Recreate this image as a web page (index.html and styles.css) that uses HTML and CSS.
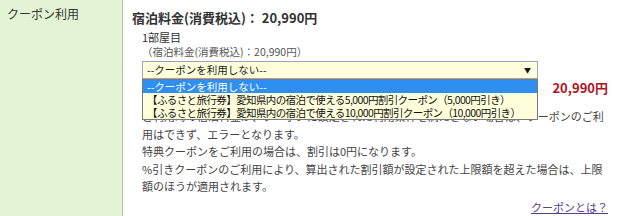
FILE: index.html
```html
<!DOCTYPE html>
<html lang="ja">
<head>
<meta charset="utf-8">
<title>クーポン利用</title>
<link rel="stylesheet" href="styles.css">
</head>
<body>
<div class="row">
  <div class="label">クーポン利用</div>
  <div class="content">
    <div class="total">宿泊料金(消費税込)：&nbsp;20,990円</div>
    <div class="room">
      <div class="room-title">1部屋目</div>
      <div class="room-price">（宿泊料金(消費税込)：20,990円）</div>
      <div class="select-wrap">
        <div class="select"><span>--クーポンを利用しない--</span><span class="arrow">▼</span></div>
        <ul class="options">
          <li class="selected">--クーポンを利用しない--</li>
          <li>【ふるさと旅行券】愛知県内の宿泊で使える5,000円割引クーポン（5,000円引き）</li>
          <li>【ふるさと旅行券】愛知県内の宿泊で使える10,000円割引クーポン（10,000円引き）</li>
        </ul>
      </div>
      <div class="discount-price">20,990円</div>
      <div class="notes">
        <p>ご利用時の宿泊料金が、クーポンに設定された利用条件を満たさない場合は、クーポンのご利用はできず、エラーとなります。</p>
        <p>特典クーポンをご利用の場合は、割引は0円になります。</p>
        <p>%引きクーポンのご利用により、算出された割引額が設定された上限額を超えた場合は、上限額のほうが適用されます。</p>
      </div>
    </div>
    <div class="link-row"><a class="help-link" href="#">クーポンとは？</a></div>
  </div>
</div>
</body>
</html>
```

FILE: styles.css
```css
html, body {
  margin: 0;
  padding: 0;
  background: #ffffff;
}

body {
  font-family: "Noto Sans CJK JP", "Noto Sans", sans-serif;
  color: #333333;
  width: 620px;
  height: 216px;
  overflow: hidden;
}

.row {
  display: flex;
  height: 216px;
}

.label {
  width: 123px;
  flex: none;
  background: #e2f4d4;
  border-right: 1px solid #a6cf8c;
  font-size: 12px;
  line-height: 16px;
  padding: 6px 0 0 7px;
  box-sizing: border-box;
  color: #333;
}

.content {
  flex: 1;
  padding: 9px 12px 0 9px;
  display: flex;
  flex-direction: column;
}

.total {
  font-size: 13px;
  font-weight: bold;
  line-height: 18px;
  margin-bottom: 2px;
  color: #333;
}

.room {
  padding-left: 10px;
  display: flex;
  flex-direction: column;
}

.room-title {
  font-size: 11px;
  line-height: 16px;
}

.room-price {
  font-size: 10.5px;
  line-height: 13px;
  margin-bottom: 3px;
  color: #555;
}

.select-wrap {
  position: relative;
  width: 396px;
}

.select {
  height: 18px;
  box-sizing: border-box;
  border: 1px solid #9aa4b4;
  background: #ffffdc;
  font-size: 10.5px;
  line-height: 16px;
  padding: 0 6px 0 4px;
  display: flex;
  justify-content: space-between;
  align-items: center;
  color: #222;
}

.arrow {
  font-size: 7px;
  color: #111;
}

.options {
  position: absolute;
  left: 0;
  top: 18px;
  width: 396px;
  box-sizing: border-box;
  margin: 0;
  padding: 0;
  list-style: none;
  border: 1px solid #7a7a7a;
  background: #ffffdc;
  z-index: 2;
  font-size: 10.5px;
  line-height: 13px;
  color: #111;
}

.options li {
  padding: 0 4px;
  white-space: nowrap;
  letter-spacing: -0.6px;
}

.options li.selected {
  background: #2f8ff0;
  color: #ffffff;
  letter-spacing: 0;
}

.discount-price {
  align-self: flex-end;
  font-size: 13px;
  font-weight: bold;
  color: #b0151c;
  line-height: 18px;
  margin-top: 0;
}

.notes {
  margin-top: 11px;
  font-size: 11px;
  line-height: 17.5px;
  color: #444;
}

.notes p {
  margin: 0;
}

.link-row {
  display: flex;
  justify-content: flex-end;
  margin-top: 3px;
}

.help-link {
  font-size: 11px;
  line-height: 16px;
  color: #5b3d8c;
  text-decoration: underline;
}
```
